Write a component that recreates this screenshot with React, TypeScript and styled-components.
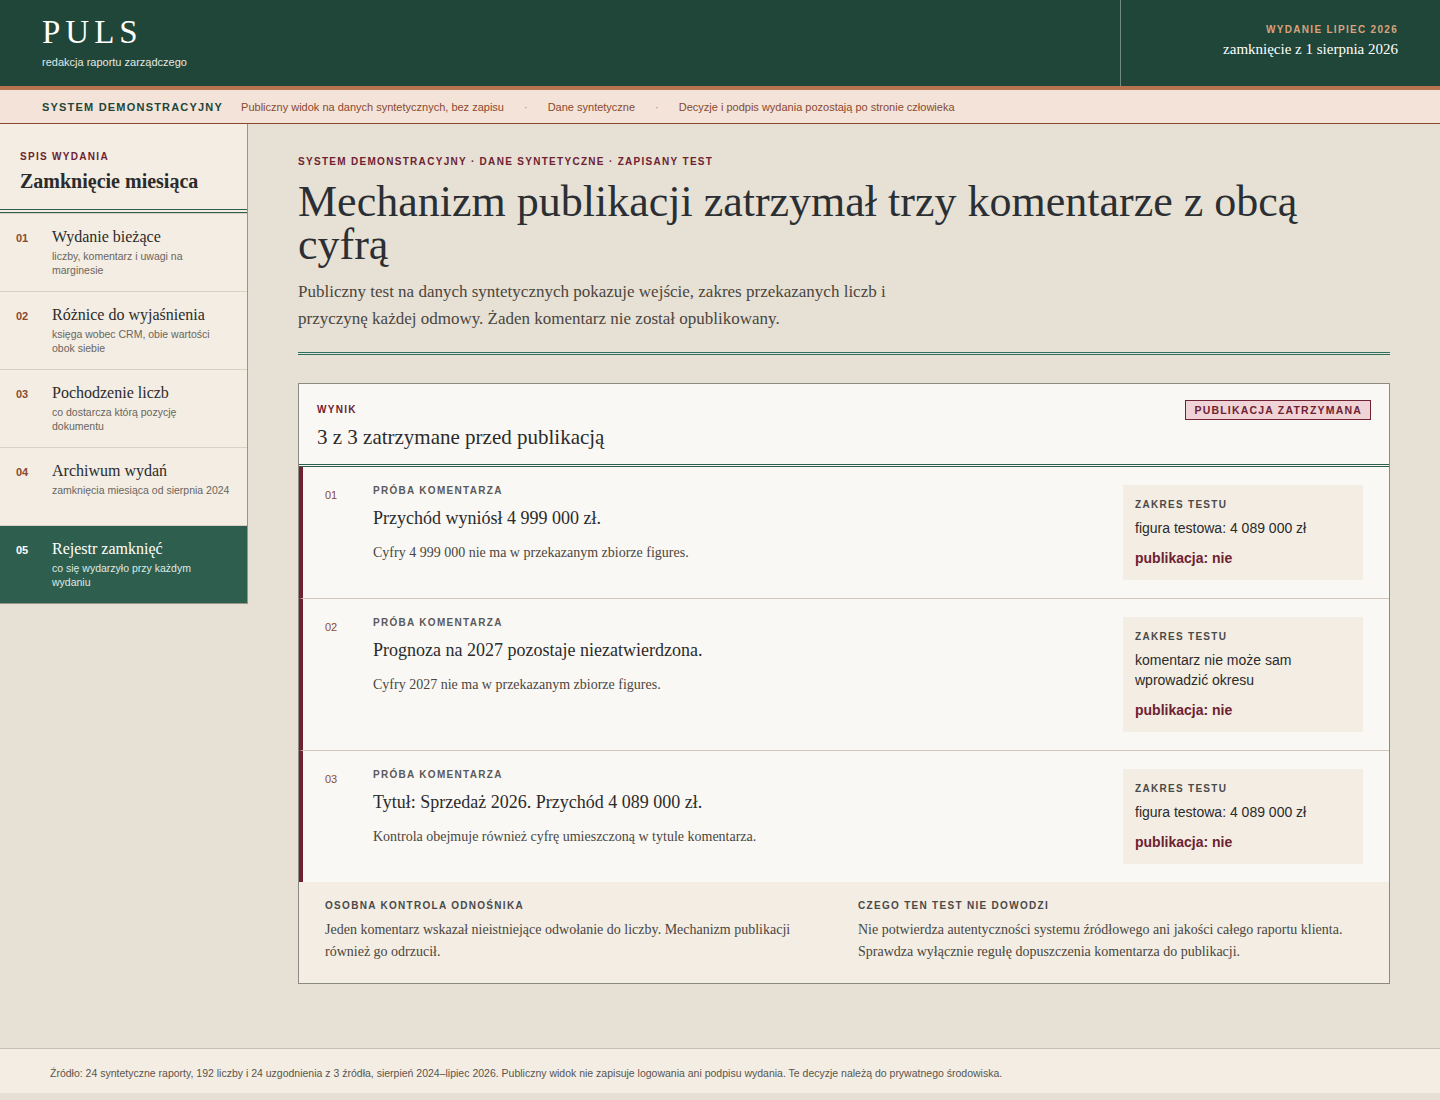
import React from 'react';
import styled, { createGlobalStyle } from 'styled-components';

const serif = '"Liberation Serif", "DejaVu Serif", serif';
const sans = '"Liberation Sans", Arial, sans-serif';

const Global = createGlobalStyle`
  body { margin: 0; background: #e7e0d4; font-family: ${sans}; color: #2b2b2b; }
  * { box-sizing: border-box; }
`;

const Header = styled.header`
  height: 90px;
  background: #1f4638;
  border-bottom: 4px solid #b87350;
  display: flex;
`;
const Brand = styled.div`
  flex: 1;
  padding: 14px 42px;
  color: #fff;
`;
const Logo = styled.div`
  font-family: ${serif};
  font-size: 33px;
  letter-spacing: 5px;
  line-height: 36px;
`;
const Tagline = styled.div`
  font-size: 11px;
  margin-top: 6px;
  color: #e3e8e4;
`;
const Edition = styled.div`
  width: 320px;
  border-left: 1px solid #6f8a80;
  padding: 24px 42px 0 0;
  text-align: right;
`;
const Kicker = styled.div<{ $color: string }>`
  font-size: 10px;
  font-weight: 700;
  letter-spacing: 1.3px;
  text-transform: uppercase;
  color: ${(p) => p.$color};
`;
const EditionDate = styled.div`
  font-family: ${serif};
  font-size: 15px;
  color: #fff;
  margin-top: 6px;
`;
const NoticeBar = styled.div`
  height: 34px;
  background: #f3e3d8;
  border-bottom: 1px solid #8a4a30;
  display: flex;
  align-items: center;
  padding: 0 42px;
  gap: 18px;
  font-size: 11px;
  color: #8a4a30;
`;
const NoticeLabel = styled.span`
  font-weight: 700;
  letter-spacing: 1.2px;
  color: #1f4638;
`;
const Dot = styled.span`
  color: #b08878;
  padding: 0 2px;
`;

const Body = styled.div`
  display: flex;
  align-items: flex-start;
`;
const Sidebar = styled.nav`
  width: 248px;
  background: #f3ede3;
  border-right: 1px solid #9a9488;
  border-bottom: 1px solid #9a9488;
`;
const SideHead = styled.div`
  padding: 27px 20px 16px;
  border-bottom: 4px double #2e5e4e;
`;
const SideTitle = styled.div`
  font-family: ${serif};
  font-weight: 700;
  font-size: 20px;
  margin-top: 8px;
  color: #2b2b2b;
`;
const NavItem = styled.div<{ $active?: boolean }>`
  height: 78px;
  display: grid;
  grid-template-columns: 36px 1fr;
  padding: 14px 16px 0 16px;
  border-top: 1px solid #d9d1c4;
  background: ${(p) => (p.$active ? '#2e5e4e' : 'transparent')};
  color: ${(p) => (p.$active ? '#fff' : '#2b2b2b')};
`;
const NavNum = styled.div<{ $active?: boolean }>`
  font-size: 11px;
  font-weight: 700;
  padding-top: 4px;
  color: ${(p) => (p.$active ? '#fff' : '#8a4a30')};
`;
const NavTitle = styled.div`
  font-family: ${serif};
  font-size: 16px;
`;
const NavSub = styled.div<{ $active?: boolean }>`
  font-size: 10.5px;
  line-height: 14px;
  margin-top: 3px;
  color: ${(p) => (p.$active ? '#dfe9e4' : '#6a655e')};
`;

const Main = styled.main`
  flex: 1;
  padding: 32px 50px 64px 50px;
`;
const Title = styled.h1`
  font-family: ${serif};
  font-weight: 400;
  font-size: 44px;
  line-height: 43px;
  margin: 13px 0 12px;
  color: #2b2f33;
`;
const Lede = styled.p`
  font-family: ${serif};
  font-size: 17px;
  line-height: 27px;
  color: #4a4640;
  max-width: 640px;
  margin: 0 0 20px;
`;
const Rule = styled.div`
  border-top: 3px double #2e6e5e;
  margin-bottom: 28px;
`;
const Card = styled.section`
  background: #faf8f4;
  border: 1px solid #8a8a80;
`;
const CardHead = styled.div`
  height: 83px;
  padding: 20px 18px 0;
  display: flex;
  justify-content: space-between;
  align-items: flex-start;
  border-bottom: 3px double #2e5e4e;
`;
const CardResult = styled.div`
  font-family: ${serif};
  font-size: 21px;
  margin-top: 10px;
`;
const Badge = styled.span`
  font-size: 10.5px;
  font-weight: 700;
  letter-spacing: 1.2px;
  color: #6e2232;
  background: #f0d3d6;
  border: 1px solid #6e2232;
  padding: 3px 8px;
  margin-top: -4px;
`;
const Row = styled.div`
  display: grid;
  grid-template-columns: 48px 1fr 240px;
  column-gap: 0;
  padding: 18px 26px 18px 22px;
  border-left: 4px solid #6e2232;
  & + & { border-top: 1px solid #cfc8bb; }
`;
const RowNum = styled.div`
  font-size: 11px;
  color: #8a4a30;
  padding-top: 4px;
`;
const RowClaim = styled.div`
  font-family: ${serif};
  font-size: 18px;
  margin: 12px 0 16px;
`;
const RowNote = styled.div`
  font-family: ${serif};
  font-size: 14px;
  color: #4a4640;
`;
const Scope = styled.div`
  background: #f3ede3;
  padding: 14px 12px;
`;
const ScopeText = styled.div`
  font-size: 14px;
  line-height: 20px;
  margin: 8px 0 12px;
  color: #2b2b2b;
`;
const ScopeVerdict = styled.div`
  font-size: 14px;
  font-weight: 700;
  color: #6e2232;
`;
const Notes = styled.div`
  background: #f3ede3;
  display: grid;
  grid-template-columns: 1fr 1fr;
  gap: 28px;
  padding: 18px 26px 20px;
`;
const NoteText = styled.p`
  font-family: ${serif};
  font-size: 14px;
  line-height: 22px;
  color: #4a4640;
  margin: 8px 0 0;
`;
const Footer = styled.footer`
  background: #f3ede3;
  border-top: 1px solid #c9c1b4;
  padding: 18px 50px 14px;
  font-size: 10.5px;
  color: #5a554e;
`;

const nav = [
  ['01', 'Wydanie bieżące', 'liczby, komentarz i uwagi na marginesie'],
  ['02', 'Różnice do wyjaśnienia', 'księga wobec CRM, obie wartości obok siebie'],
  ['03', 'Pochodzenie liczb', 'co dostarcza którą pozycję dokumentu'],
  ['04', 'Archiwum wydań', 'zamknięcia miesiąca od sierpnia 2024'],
  ['05', 'Rejestr zamknięć', 'co się wydarzyło przy każdym wydaniu'],
];

const rows = [
  ['01', 'Przychód wyniósł 4 999 000 zł.', 'Cyfry 4 999 000 nie ma w przekazanym zbiorze figures.', 'figura testowa: 4 089 000 zł'],
  ['02', 'Prognoza na 2027 pozostaje niezatwierdzona.', 'Cyfry 2027 nie ma w przekazanym zbiorze figures.', 'komentarz nie może sam wprowadzić okresu'],
  ['03', 'Tytuł: Sprzedaż 2026. Przychód 4 089 000 zł.', 'Kontrola obejmuje również cyfrę umieszczoną w tytule komentarza.', 'figura testowa: 4 089 000 zł'],
];

export default function App() {
  return (
    <>
      <Global />
      <Header>
        <Brand>
          <Logo>PULS</Logo>
          <Tagline>redakcja raportu zarządczego</Tagline>
        </Brand>
        <Edition>
          <Kicker $color="#d9a27e">Wydanie lipiec 2026</Kicker>
          <EditionDate>zamknięcie z 1 sierpnia 2026</EditionDate>
        </Edition>
      </Header>
      <NoticeBar>
        <NoticeLabel>SYSTEM DEMONSTRACYJNY</NoticeLabel>
        <span>Publiczny widok na danych syntetycznych, bez zapisu</span>
        <Dot>·</Dot>
        <span>Dane syntetyczne</span>
        <Dot>·</Dot>
        <span>Decyzje i podpis wydania pozostają po stronie człowieka</span>
      </NoticeBar>
      <Body>
        <Sidebar>
          <SideHead>
            <Kicker $color="#6e2232">Spis wydania</Kicker>
            <SideTitle>Zamknięcie miesiąca</SideTitle>
          </SideHead>
          {nav.map(([n, t, s]) => {
            const active = n === '05';
            return (
              <NavItem key={n} $active={active}>
                <NavNum $active={active}>{n}</NavNum>
                <div>
                  <NavTitle>{t}</NavTitle>
                  <NavSub $active={active}>{s}</NavSub>
                </div>
              </NavItem>
            );
          })}
        </Sidebar>
        <Main>
          <Kicker $color="#6e2232">System demonstracyjny · dane syntetyczne · zapisany test</Kicker>
          <Title>Mechanizm publikacji zatrzymał trzy komentarze z obcą cyfrą</Title>
          <Lede>
            Publiczny test na danych syntetycznych pokazuje wejście, zakres przekazanych liczb i przyczynę
            każdej odmowy. Żaden komentarz nie został opublikowany.
          </Lede>
          <Rule />
          <Card>
            <CardHead>
              <div>
                <Kicker $color="#6e2232">Wynik</Kicker>
                <CardResult>3 z 3 zatrzymane przed publikacją</CardResult>
              </div>
              <Badge>PUBLIKACJA ZATRZYMANA</Badge>
            </CardHead>
            {rows.map(([n, claim, note, scope]) => (
              <Row key={n}>
                <RowNum>{n}</RowNum>
                <div>
                  <Kicker $color="#5a5a5a">Próba komentarza</Kicker>
                  <RowClaim>{claim}</RowClaim>
                  <RowNote>{note}</RowNote>
                </div>
                <Scope>
                  <Kicker $color="#4a4a4a">Zakres testu</Kicker>
                  <ScopeText>{scope}</ScopeText>
                  <ScopeVerdict>publikacja: nie</ScopeVerdict>
                </Scope>
              </Row>
            ))}
            <Notes>
              <div>
                <Kicker $color="#4a4a4a">Osobna kontrola odnośnika</Kicker>
                <NoteText>
                  Jeden komentarz wskazał nieistniejące odwołanie do liczby. Mechanizm publikacji również go odrzucił.
                </NoteText>
              </div>
              <div>
                <Kicker $color="#4a4a4a">Czego ten test nie dowodzi</Kicker>
                <NoteText>
                  Nie potwierdza autentyczności systemu źródłowego ani jakości całego raportu klienta. Sprawdza
                  wyłącznie regułę dopuszczenia komentarza do publikacji.
                </NoteText>
              </div>
            </Notes>
          </Card>
        </Main>
      </Body>
      <Footer>
        Źródło: 24 syntetyczne raporty, 192 liczby i 24 uzgodnienia z 3 źródła, sierpień 2024–lipiec 2026. Publiczny
        widok nie zapisuje logowania ani podpisu wydania. Te decyzje należą do prywatnego środowiska.
      </Footer>
    </>
  );
}
